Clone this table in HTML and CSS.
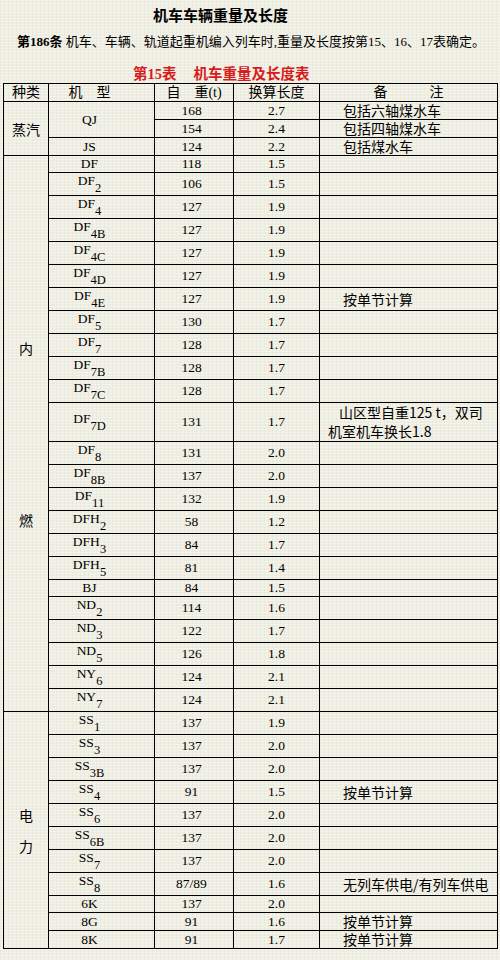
FILE: index.html
```html
<!DOCTYPE html>
<html lang="zh-CN">
<head>
<meta charset="utf-8">
<title>机车车辆重量及长度</title>
<link rel="stylesheet" href="styles.css">
</head>
<body>
<div class="page">
  <h1 class="title">机车车辆重量及长度</h1>
  <p class="rule"><b>第186条</b> 机车、车辆、轨道起重机编入列车时,重量及长度按第15、16、17表确定。</p>
  <h2 class="caption">第15表<span class="cap-gap">机车重量及长度表</span></h2>
  <table class="data">
    <colgroup>
      <col class="c-kind"><col class="c-model"><col class="c-wt"><col class="c-len"><col class="c-note">
    </colgroup>
    <tr class="hd">
      <th>种类</th><th class="model">机　型</th><th>自　重(t)</th><th>换算长度</th><th>备　　　注</th>
    </tr>
    <tr class="r18">
      <td rowspan="3" class="kind">蒸汽</td><td rowspan="2" class="model">QJ</td><td class="num">168</td><td>2.7</td><td class="note">包括六轴煤水车</td>
    </tr>
    <tr class="r18"><td class="num">154</td><td>2.4</td><td class="note">包括四轴煤水车</td></tr>
    <tr class="r18"><td class="model">JS</td><td class="num">124</td><td>2.2</td><td class="note">包括煤水车</td></tr>

    <tr class="r17">
      <td rowspan="24" class="kind"><div class="vert gap-nr"><span>内</span><span>燃</span></div></td>
      <td class="model">DF</td><td class="num">118</td><td>1.5</td><td class="note"></td>
    </tr>
    <tr class="r23"><td class="model">DF<sub>2</sub></td><td class="num">106</td><td>1.5</td><td class="note"></td></tr>
    <tr class="r23"><td class="model">DF<sub>4</sub></td><td class="num">127</td><td>1.9</td><td class="note"></td></tr>
    <tr class="r23"><td class="model">DF<sub>4B</sub></td><td class="num">127</td><td>1.9</td><td class="note"></td></tr>
    <tr class="r23"><td class="model">DF<sub>4C</sub></td><td class="num">127</td><td>1.9</td><td class="note"></td></tr>
    <tr class="r23"><td class="model">DF<sub>4D</sub></td><td class="num">127</td><td>1.9</td><td class="note"></td></tr>
    <tr class="r23"><td class="model">DF<sub>4E</sub></td><td class="num">127</td><td>1.9</td><td class="note">按单节计算</td></tr>
    <tr class="r23"><td class="model">DF<sub>5</sub></td><td class="num">130</td><td>1.7</td><td class="note"></td></tr>
    <tr class="r23"><td class="model">DF<sub>7</sub></td><td class="num">128</td><td>1.7</td><td class="note"></td></tr>
    <tr class="r23"><td class="model">DF<sub>7B</sub></td><td class="num">128</td><td>1.7</td><td class="note"></td></tr>
    <tr class="r23"><td class="model">DF<sub>7C</sub></td><td class="num">128</td><td>1.7</td><td class="note"></td></tr>
    <tr class="r35"><td class="model">DF<sub>7D</sub></td><td class="num">131</td><td>1.7</td><td class="note long">山区型自重125 t，双司<br>机室机车换长1.8</td></tr>
    <tr class="r23"><td class="model">DF<sub>8</sub></td><td class="num">131</td><td>2.0</td><td class="note"></td></tr>
    <tr class="r23"><td class="model">DF<sub>8B</sub></td><td class="num">137</td><td>2.0</td><td class="note"></td></tr>
    <tr class="r23"><td class="model">DF<sub>11</sub></td><td class="num">132</td><td>1.9</td><td class="note"></td></tr>
    <tr class="r23"><td class="model">DFH<sub>2</sub></td><td class="num">58</td><td>1.2</td><td class="note"></td></tr>
    <tr class="r23"><td class="model">DFH<sub>3</sub></td><td class="num">84</td><td>1.7</td><td class="note"></td></tr>
    <tr class="r23"><td class="model">DFH<sub>5</sub></td><td class="num">81</td><td>1.4</td><td class="note"></td></tr>
    <tr class="r17"><td class="model">BJ</td><td class="num">84</td><td>1.5</td><td class="note"></td></tr>
    <tr class="r23"><td class="model">ND<sub>2</sub></td><td class="num">114</td><td>1.6</td><td class="note"></td></tr>
    <tr class="r23"><td class="model">ND<sub>3</sub></td><td class="num">122</td><td>1.7</td><td class="note"></td></tr>
    <tr class="r23"><td class="model">ND<sub>5</sub></td><td class="num">126</td><td>1.8</td><td class="note"></td></tr>
    <tr class="r23"><td class="model">NY<sub>6</sub></td><td class="num">124</td><td>2.1</td><td class="note"></td></tr>
    <tr class="r23"><td class="model">NY<sub>7</sub></td><td class="num">124</td><td>2.1</td><td class="note"></td></tr>

    <tr class="r23">
      <td rowspan="11" class="kind"><div class="vert gap-el"><span>电</span><span>力</span></div></td>
      <td class="model">SS<sub>1</sub></td><td class="num">137</td><td>1.9</td><td class="note"></td>
    </tr>
    <tr class="r23"><td class="model">SS<sub>3</sub></td><td class="num">137</td><td>2.0</td><td class="note"></td></tr>
    <tr class="r23"><td class="model">SS<sub>3B</sub></td><td class="num">137</td><td>2.0</td><td class="note"></td></tr>
    <tr class="r23"><td class="model">SS<sub>4</sub></td><td class="num">91</td><td>1.5</td><td class="note">按单节计算</td></tr>
    <tr class="r23"><td class="model">SS<sub>6</sub></td><td class="num">137</td><td>2.0</td><td class="note"></td></tr>
    <tr class="r23"><td class="model">SS<sub>6B</sub></td><td class="num">137</td><td>2.0</td><td class="note"></td></tr>
    <tr class="r23"><td class="model">SS<sub>7</sub></td><td class="num">137</td><td>2.0</td><td class="note"></td></tr>
    <tr class="r23"><td class="model">SS<sub>8</sub></td><td class="num">87/89</td><td>1.6</td><td class="note">无列车供电/有列车供电</td></tr>
    <tr class="r17"><td class="model">6K</td><td class="num">137</td><td>2.0</td><td class="note"></td></tr>
    <tr class="r18"><td class="model">8G</td><td class="num">91</td><td>1.6</td><td class="note">按单节计算</td></tr>
    <tr class="r18"><td class="model">8K</td><td class="num">91</td><td>1.7</td><td class="note">按单节计算</td></tr>
  </table>
</div>
</body>
</html>
```

FILE: styles.css
```css
html, body {
  margin: 0;
  padding: 0;
}

body {
  background-color: #efeee3;
  background-image:
    repeating-linear-gradient(0deg, rgba(255,255,250,0.35) 0 1px, rgba(0,0,0,0) 1px 3px),
    repeating-linear-gradient(90deg, rgba(120,115,90,0.05) 0 1px, rgba(0,0,0,0) 1px 4px);
  color: #000;
  font-family: "Liberation Serif", "Noto Sans CJK SC", serif;
}

.page {
  padding-top: 5px;
}

.title {
  margin: 0;
  padding-left: 153px;
  font-family: "Noto Sans CJK SC", sans-serif;
  font-size: 15px;
  line-height: 20px;
  font-weight: bold;
}

.rule {
  margin: 7px 0 0;
  padding-left: 17px;
  font-size: 13px;
  line-height: 20px;
}

.rule b {
  font-weight: bold;
}

.caption {
  margin: 13px 0 0;
  padding-left: 133px;
  color: #d81c1c;
  font-size: 14.5px;
  line-height: 18px;
  font-weight: bold;
}

.cap-gap {
  margin-left: 17px;
}

.data {
  margin-left: 3px;
  width: 494px;
  table-layout: fixed;
  border-collapse: collapse;
  border: 1px solid #000;
}

.c-kind { width: 45px; }
.c-model { width: 106px; }
.c-wt { width: 79px; }
.c-len { width: 86px; }
.c-note { width: 178px; }

.data th,
.data td {
  border: 1px solid #000;
  padding: 0;
  text-align: center;
  vertical-align: middle;
  font-size: 13.5px;
  line-height: 14px;
  font-weight: normal;
}

.data th {
  font-size: 14px;
  height: 17px;
}

.data th.model,
.data td.model {
  padding-right: 24px;
}

.data td.num {
  padding-right: 5px;
}

.r17 td { height: 16px; }
.r18 td { height: 17px; }
.r23 td { height: 22px; }
.r35 td { height: 34px; }

.data td.kind {
  font-family: "Noto Sans CJK SC", sans-serif;
  font-size: 14px;
  line-height: 16px;
}

.vert {
  display: flex;
  flex-direction: column;
  align-items: center;
}

.gap-nr { gap: 156px; }
.gap-el { gap: 15px; }

.data sub {
  font-size: 12.5px;
  line-height: 12px;
  vertical-align: -7px;
}

.data td.note {
  text-align: left;
  padding-left: 23px;
  font-family: "Noto Sans CJK SC", sans-serif;
  font-size: 14px;
  line-height: 15px;
}

.data td.note.long {
  padding-left: 8px;
  text-indent: 11px;
  line-height: 19px;
}
```
